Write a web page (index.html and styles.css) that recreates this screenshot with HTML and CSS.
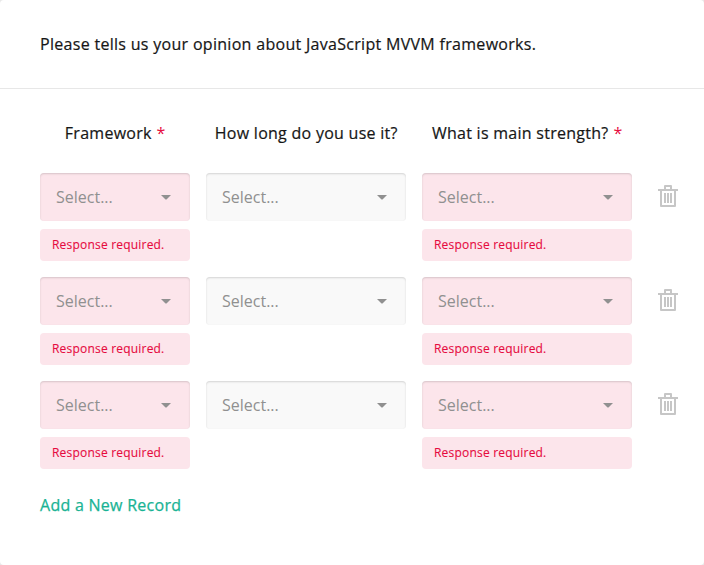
FILE: index.html
```
<!DOCTYPE html>
<html lang="en">
<head>
<meta charset="utf-8">
<title>Survey</title>
<link rel="stylesheet" href="styles.css">
</head>
<body>
<main class="card">
  <h1 class="title">Please tells us your opinion about JavaScript MVVM frameworks.</h1>
  <section class="panel">
    <div class="row head">
      <div>Framework <span class="req">*</span></div>
      <div>How long do you use it?</div>
      <div>What is main strength? <span class="req">*</span></div>
    </div>
    <div class="row">
      <div class="cell"><div class="select invalid"><span>Select...</span><i class="arrow"></i></div><div class="error">Response required.</div></div>
      <div class="cell"><div class="select"><span>Select...</span><i class="arrow"></i></div></div>
      <div class="cell"><div class="select invalid"><span>Select...</span><i class="arrow"></i></div><div class="error">Response required.</div></div>
      <svg class="trash" viewBox="0 0 20 22"><path d="M0 4h6V1q0-1 1-1h6q1 0 1 1v3h6v2h-2v15q0 1-1 1H3q-1 0-1-1V6H0zM8 4h4V2H8zM4 6v14h12V6zM6 8h2v10H6zM9 8h2v10H9zM12 8h2v10h-2z"/></svg>
    </div>
    <div class="row">
      <div class="cell"><div class="select invalid"><span>Select...</span><i class="arrow"></i></div><div class="error">Response required.</div></div>
      <div class="cell"><div class="select"><span>Select...</span><i class="arrow"></i></div></div>
      <div class="cell"><div class="select invalid"><span>Select...</span><i class="arrow"></i></div><div class="error">Response required.</div></div>
      <svg class="trash" viewBox="0 0 20 22"><path d="M0 4h6V1q0-1 1-1h6q1 0 1 1v3h6v2h-2v15q0 1-1 1H3q-1 0-1-1V6H0zM8 4h4V2H8zM4 6v14h12V6zM6 8h2v10H6zM9 8h2v10H9zM12 8h2v10h-2z"/></svg>
    </div>
    <div class="row">
      <div class="cell"><div class="select invalid"><span>Select...</span><i class="arrow"></i></div><div class="error">Response required.</div></div>
      <div class="cell"><div class="select"><span>Select...</span><i class="arrow"></i></div></div>
      <div class="cell"><div class="select invalid"><span>Select...</span><i class="arrow"></i></div><div class="error">Response required.</div></div>
      <svg class="trash" viewBox="0 0 20 22"><path d="M0 4h6V1q0-1 1-1h6q1 0 1 1v3h6v2h-2v15q0 1-1 1H3q-1 0-1-1V6H0zM8 4h4V2H8zM4 6v14h12V6zM6 8h2v10H6zM9 8h2v10H9zM12 8h2v10h-2z"/></svg>
    </div>
    <div class="add">Add a New Record</div>
  </section>
</main>
</body>
</html>
```
FILE: styles.css
```
* { box-sizing: border-box; }
body {
  margin: 0;
  background: #e8e8e8;
  color: #161616;
  font: 16px/24px "Open Sans", sans-serif;
}
.card {
  height: 565px;
  background: #fff;
  border-radius: 4px;
  overflow: hidden;
}
.title {
  margin: 0;
  height: 89px;
  padding: 32px 40px;
  border-bottom: 1px solid #e7e7e7;
  font-size: 16px;
  font-weight: 400;
  letter-spacing: .3px;
  -webkit-text-stroke: .2px;
  white-space: nowrap;
}
.panel { padding: 32px 26px 0 40px; }
.row {
  display: grid;
  grid-template-columns: 150px 200px 210px 20px;
  column-gap: 16px;
  margin-bottom: 16px;
}
.head {
  height: 36px;
  letter-spacing: .27px;
  -webkit-text-stroke: .2px;
  text-align: center;
  text-indent: .5px;
  white-space: nowrap;
}
.req {
  margin-left: .5px;
  color: #e60a3e;
  -webkit-text-stroke: 0;
}
.select {
  display: flex;
  align-items: center;
  justify-content: space-between;
  height: 48px;
  padding: 0 19px 0 16px;
  border-radius: 4px;
  background: #f9f9f9;
  box-shadow: inset 0 1px 2px rgba(0, 0, 0, .15);
  color: #909090;
}
.invalid { background: #fce5eb; }
.arrow {
  width: 10px;
  height: 5px;
  background: #909090;
  clip-path: polygon(0 0, 100% 0, 100% 10%, 55% 100%, 45% 100%, 0 10%);
}
.error {
  height: 32px;
  margin-top: 8px;
  padding: 8px 12px;
  border-radius: 4px;
  background: #fce5eb;
  color: #e60a3e;
  font-size: 12px;
  letter-spacing: .2px;
  -webkit-text-stroke: .1px;
  line-height: 16px;
}
.trash {
  width: 20px;
  height: 22px;
  margin: 12px 0 0 10px;
  fill: #c6c6c6;
  fill-rule: evenodd;
}
.add {
  margin-top: 24px;
  color: #19b394;
  letter-spacing: .27px;
  -webkit-text-stroke: .25px;
}
```
